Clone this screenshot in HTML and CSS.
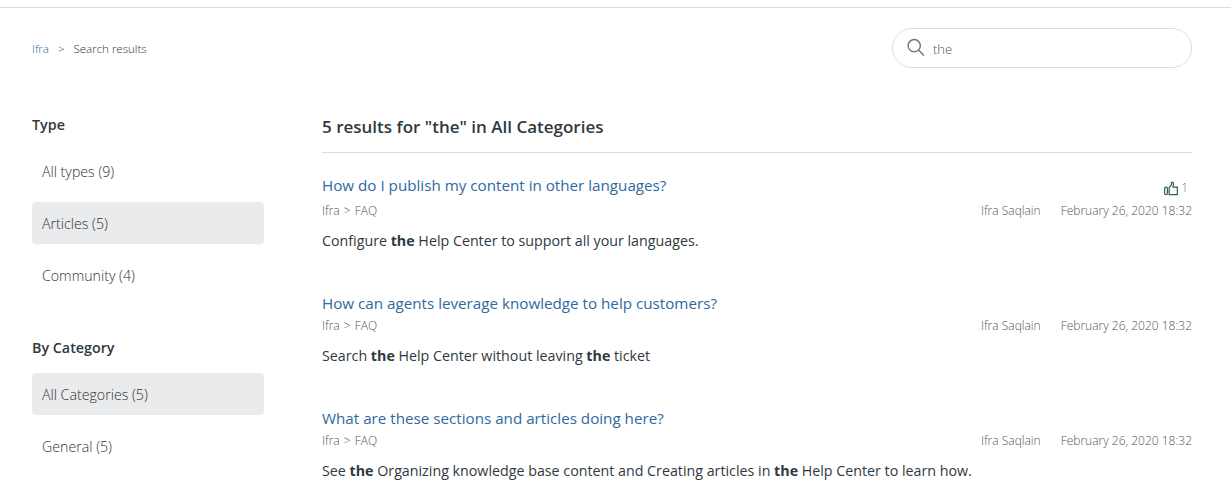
FILE: index.html
```html
<html>
  <head>
    <title>Search results</title>
    <link rel="stylesheet" href="styles.css">
  </head>
  <body>
    <div class="topline"></div>
    <div class="subnav">
      <p class="crumbs"><a href="#">Ifra</a><span class="sep">&gt;</span>Search results</p>
      <div class="search">
        <svg width="18" height="19" viewBox="0 0 20 20" fill="none" stroke="#777" stroke-width="1.6"><circle cx="8" cy="8" r="6.8"/><path d="M12.8 12.8l6 6.2"/></svg>
        <span>the</span>
      </div>
    </div>
    <div class="container">
      <div class="sidebar">
        <h3>Type</h3>
        <ul>
          <li>All types (9)</li>
          <li class="current">Articles (5)</li>
          <li>Community (4)</li>
        </ul>
        <h3 class="second">By Category</h3>
        <ul>
          <li class="current">All Categories (5)</li>
          <li>General (5)</li>
        </ul>
      </div>
      <div class="results">
        <h2>5 results for "the" in All Categories</h2>
        <div class="result first">
          <div class="title-row">
            <a href="#">How do I publish my content in other languages?</a>
            <span class="votes">
              <svg width="14" height="15" viewBox="0 0 15 15" fill="none" stroke="#2f5f5f" stroke-width="1.3"><rect x="0.7" y="6" width="3" height="8" rx="1.4"/><path d="M5.5 14V6.5L8 3.5V1h1.6l.6 1.5L9.6 6h4.7v8z"/></svg>
              1
            </span>
          </div>
          <div class="meta"><span class="path">Ifra &gt; FAQ</span><span class="byline"><span>Ifra Saqlain</span><span>February 26, 2020 18:32</span></span></div>
          <p>Configure <b>the</b> Help Center to support all your languages.</p>
        </div>
        <div class="result">
          <div class="title-row"><a href="#">How can agents leverage knowledge to help customers?</a></div>
          <div class="meta"><span class="path">Ifra &gt; FAQ</span><span class="byline"><span>Ifra Saqlain</span><span>February 26, 2020 18:32</span></span></div>
          <p>Search <b>the</b> Help Center without leaving <b>the</b> ticket</p>
        </div>
        <div class="result">
          <div class="title-row"><a href="#">What are these sections and articles doing here?</a></div>
          <div class="meta"><span class="path">Ifra &gt; FAQ</span><span class="byline"><span>Ifra Saqlain</span><span>February 26, 2020 18:32</span></span></div>
          <p>See <b>the</b> Organizing knowledge base content and Creating articles in <b>the</b> Help Center to learn how.</p>
        </div>
      </div>
    </div>
  </body>
</html>
```
FILE: styles.css
```css
html, body {
  height: 498px;
  overflow: hidden;
}
body {
  margin: 0;
  background: #fff;
  color: #2f3941;
  font-family: "Open Sans", sans-serif;
  font-size: 14px;
}
a {
  color: #2f6a9f;
  text-decoration: none;
}
.topline {
  height: 7px;
  border-bottom: 1px solid #ddd;
}
.subnav {
  display: flex;
  justify-content: space-between;
  align-items: center;
  height: 40px;
  margin-top: 20px;
  padding: 0 39px 0 32px;
}
.crumbs {
  margin: 0;
  font-size: 11.5px;
  font-weight: 300;
  color: #333;
}
.sep {
  margin: 0 9px;
}
.search {
  display: flex;
  align-items: center;
  gap: 8px;
  box-sizing: border-box;
  width: 300px;
  height: 40px;
  padding: 0 14px;
  border: 1px solid #ddd;
  border-radius: 20px;
  font-size: 13px;
  font-weight: 300;
  color: #555;
}
.search svg {
  margin-bottom: 2px;
}
.search span {
  padding-top: 2px;
}
.container {
  display: flex;
  padding: 0 39px 0 32px;
}
.sidebar {
  width: 232px;
  margin-right: 58px;
  flex-shrink: 0;
}
h3 {
  margin: 47px 0 16px;
  font-size: 14.3px;
  line-height: 19px;
  font-weight: 600;
}
h3.second {
  margin-top: 42px;
}
ul {
  margin: 0;
  padding: 0;
}
li {
  list-style: none;
  height: 42px;
  line-height: 44px;
  margin-bottom: 10px;
  padding-left: 10px;
  border-radius: 4px;
  font-size: 14.2px;
  font-weight: 300;
  color: #333;
}
li.current {
  background: #e9ebed;
}
.results {
  flex: 1;
}
h2 {
  margin: 47px 0 0;
  padding-bottom: 13px;
  border-bottom: 1px solid #ddd;
  font-size: 17px;
  line-height: 24px;
  font-weight: 600;
}
.result {
  margin-top: 42px;
}
.result.first {
  margin-top: 21px;
}
.title-row {
  display: flex;
  justify-content: space-between;
  height: 22px;
  line-height: 22px;
  font-size: 15.2px;
}
.result.first .title-row {
  height: 25px;
}
.votes {
  display: flex;
  align-items: center;
  gap: 3px;
  height: 22px;
  margin-top: 3px;
  padding-right: 4px;
  font-size: 12px;
  font-weight: 300;
  color: #777;
}
.meta {
  display: flex;
  justify-content: space-between;
  margin-top: 3px;
  font-size: 12px;
  line-height: 18px;
  font-weight: 300;
  color: #555;
}
.path {
  word-spacing: 1px;
}
.byline {
  display: flex;
  gap: 20px;
}
.result p {
  margin: 11px 0 0;
  font-size: 14.25px;
  line-height: 19px;
  color: #2f3941;
}
.result b {
  font-weight: 700;
}
```
